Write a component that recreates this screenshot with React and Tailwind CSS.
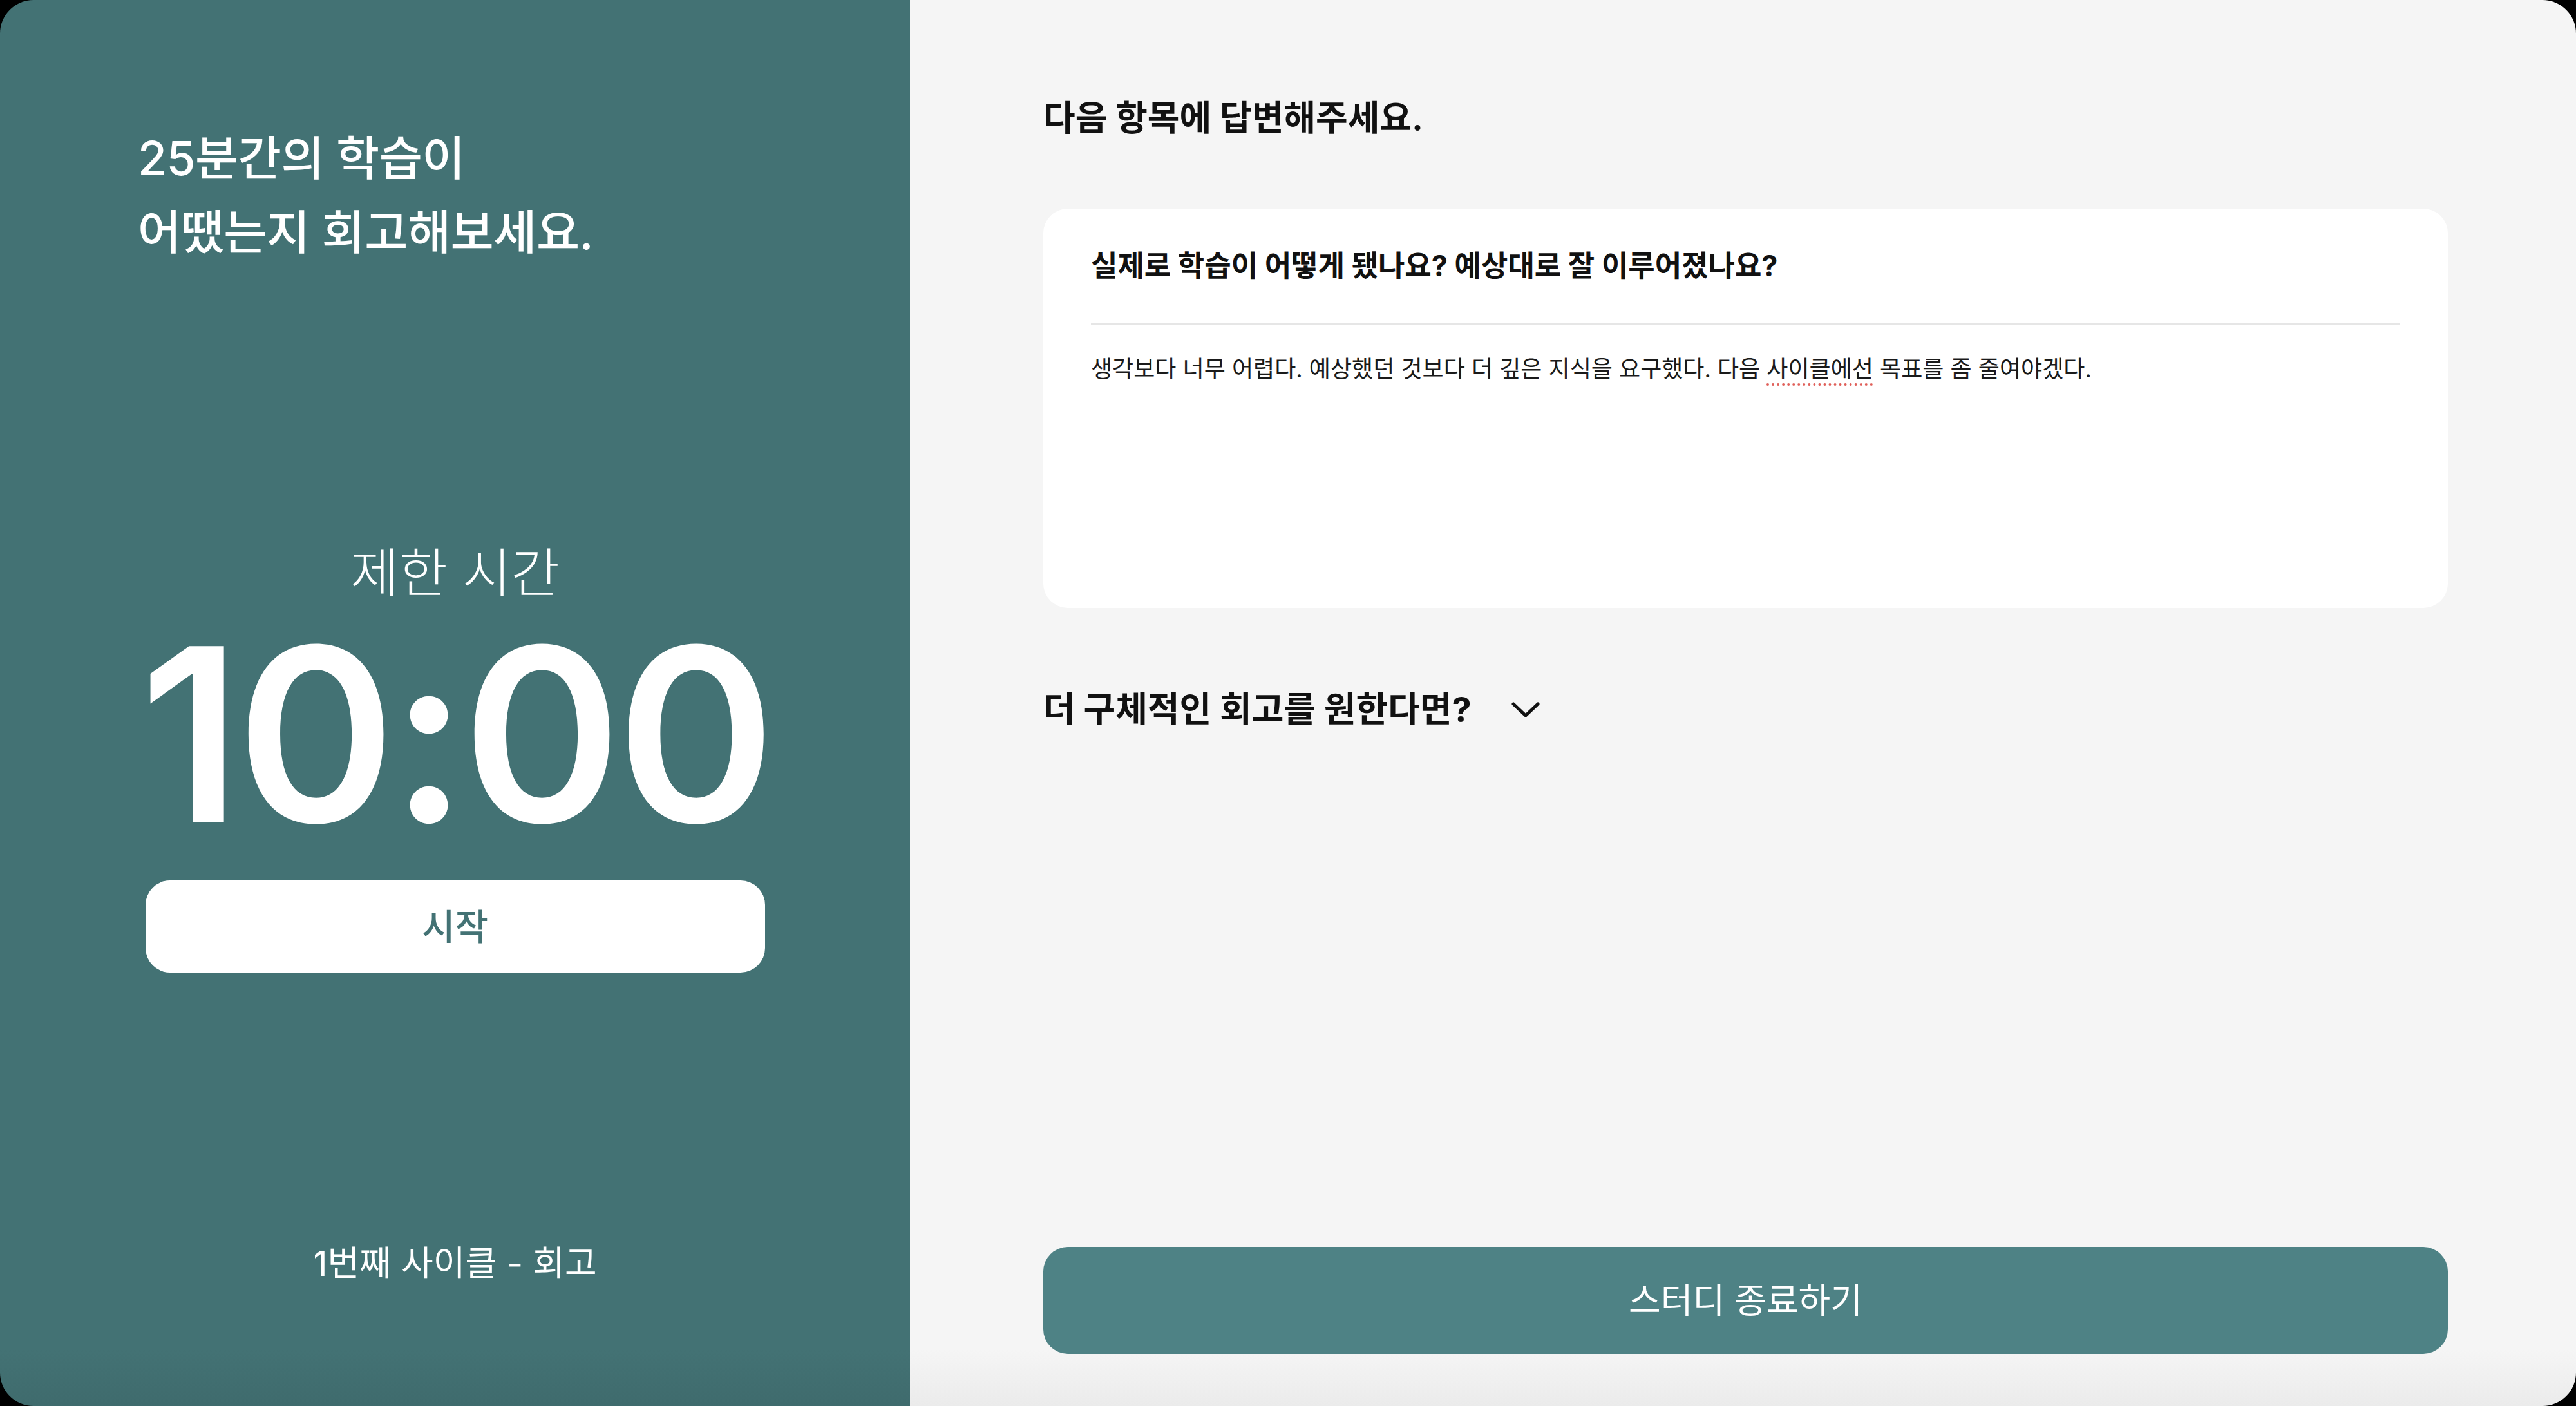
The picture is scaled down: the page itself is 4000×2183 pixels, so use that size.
const FONT = "font-['Inter','Noto_Sans_CJK_KR',sans-serif]"

function Chevron() {
  return (
    <svg width="44" height="24" viewBox="0 0 44 24" fill="none" className="ml-[62px]">
      <path d="M3 3 L22 21 L41 3" stroke="#111" strokeWidth="5" strokeLinecap="round" strokeLinejoin="round" />
    </svg>
  )
}

function TimerPanel() {
  return (
    <aside className="flex h-full w-[1413px] shrink-0 flex-col bg-[linear-gradient(to_bottom,#437274_96%,#3f6b6d)] text-white">
      <h1 className="pl-[214px] pt-[188px] text-[73px] font-medium leading-[115px] tracking-[-0.5px]">
        25분간의 학습이
        <br />
        어땠는지 회고해보세요.
      </h1>

      <div className="mt-[427px] flex flex-col items-center">
        <p className="text-[82px] font-light leading-[90px]">제한 시간</p>
        <p className="mt-[17px] text-[375px] font-semibold leading-none tracking-[-8px]">10:00</p>
        <button className="mt-[40px] h-[143px] w-[962px] rounded-[38px] bg-white text-[56px] font-medium text-[#437274]">
          시작
        </button>
      </div>

      <p className="mt-auto pb-[182px] text-center text-[54px] font-normal leading-[78px]">1번째 사이클 - 회고</p>
    </aside>
  )
}

function ReviewPanel() {
  return (
    <main className="flex h-full flex-1 flex-col bg-[linear-gradient(to_bottom,#f5f5f5_96%,#ebebeb)] pb-[81px] pl-[207px] pr-[199px] text-[#111]">
      <h2 className="pt-[152px] text-[54px] font-bold leading-[64px]">다음 항목에 답변해주세요.</h2>

      <section className="mt-[108px] h-[620px] rounded-[38px] bg-white px-[74px] pt-[61px]">
        <h3 className="border-b-[3px] border-[#e6e6e6] pb-[60px] text-[45px] font-bold leading-[56px]">
          실제로 학습이 어떻게 됐나요? 예상대로 잘 이루어졌나요?
        </h3>
        <p className="pt-[44px] text-[36px] leading-[50px] text-[#1a1a1a]">
          생각보다 너무 어렵다. 예상했던 것보다 더 깊은 지식을 요구했다. 다음{' '}
          <span className="underline decoration-[#e0605a] decoration-dotted decoration-[4px] underline-offset-[9px]">사이클에선</span>{' '}
          목표를 좀 줄여야겠다.
        </p>
      </section>

      <button className="mt-[126px] flex items-center self-start text-[54px] font-bold leading-[64px]">
        더 구체적인 회고를 원한다면?
        <Chevron />
      </button>

      <button className="mt-auto h-[166px] w-full rounded-[38px] bg-[#4e8285] text-[54px] font-normal text-white">
        스터디 종료하기
      </button>
    </main>
  )
}

export default function App() {
  return (
    <div className={`h-[2183px] w-[4000px] bg-black ${FONT}`}>
      <div className="flex h-full w-full overflow-hidden rounded-[52px]">
        <TimerPanel />
        <ReviewPanel />
      </div>
    </div>
  )
}
